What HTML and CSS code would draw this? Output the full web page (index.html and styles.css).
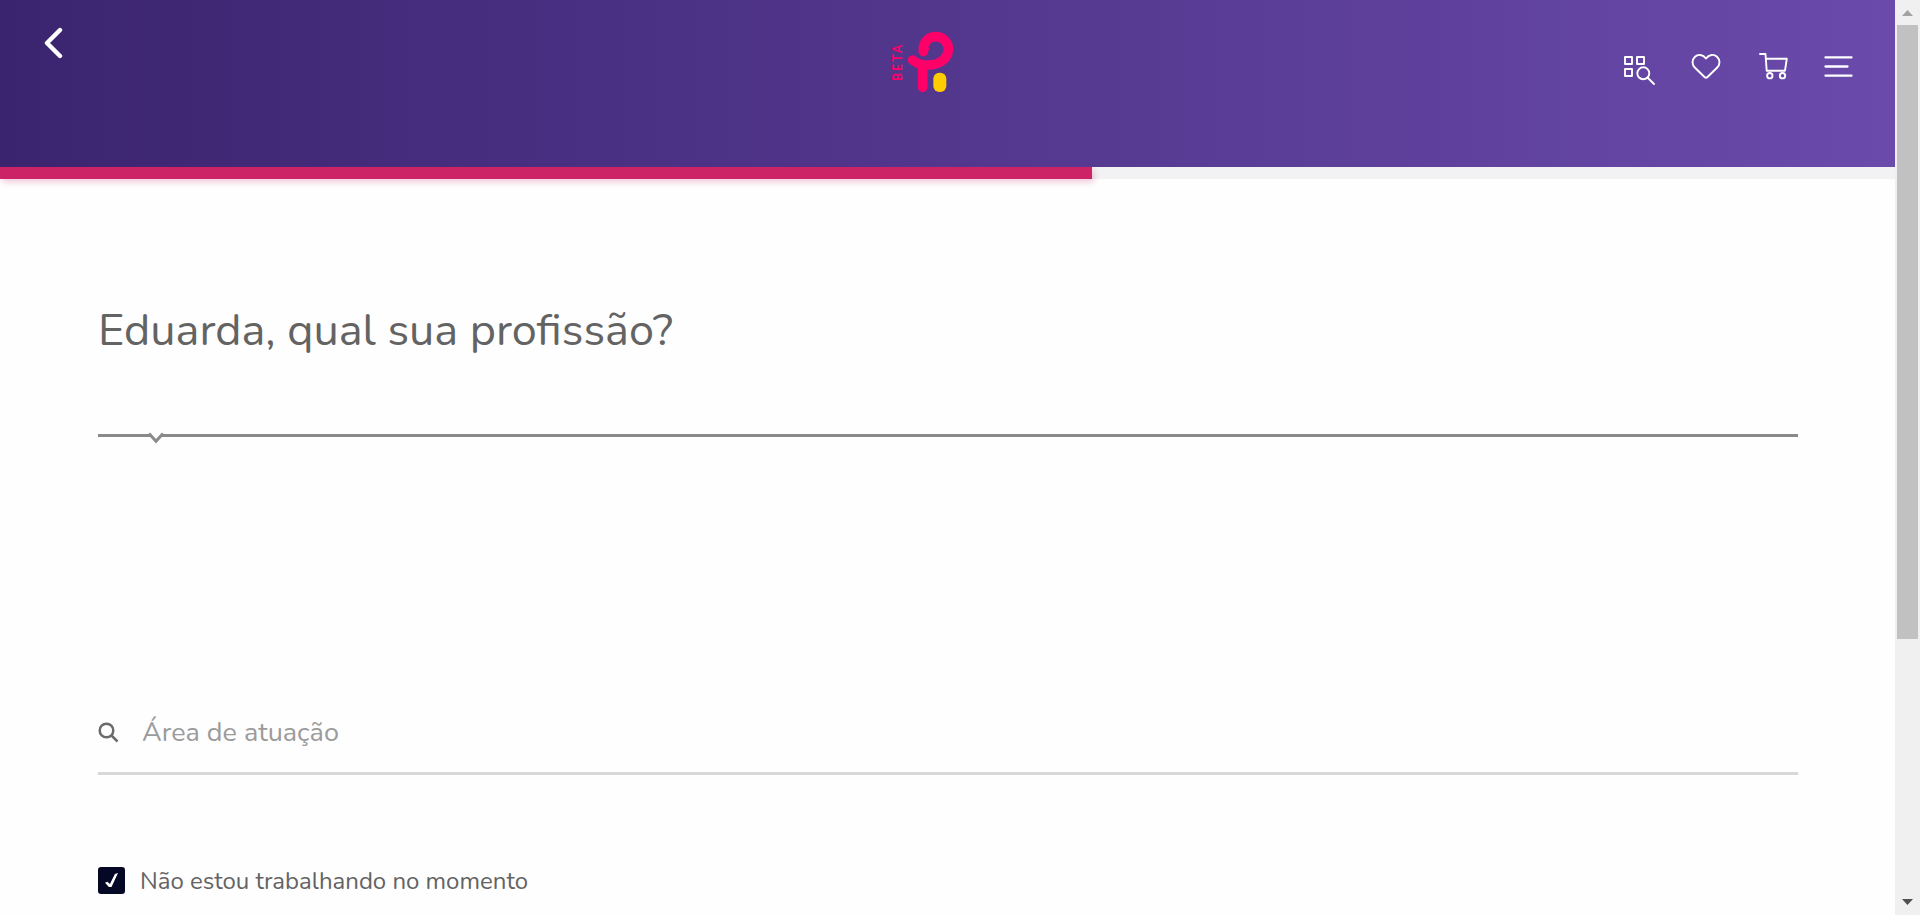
FILE: index.html
```html
<!DOCTYPE html>
<html lang="pt-BR">
<head>
<meta charset="utf-8">
<meta name="viewport" content="width=device-width, initial-scale=1">
<title>Qual sua profissão?</title>
<link rel="stylesheet" href="styles.css">
</head>
<body>
<div class="page">
  <header class="header">
    <button class="icon-button back" type="button" aria-label="Voltar">
      <svg width="20" height="32" viewBox="0 0 20 32"><path d="M16 3 3 16l13 13"/></svg>
    </button>
    <a class="logo" href="#" aria-label="Início">
      <svg width="120" height="90" viewBox="57 0 360 270">
        <path class="logo-stroke" d="M160 95V88C160 66 177 50 197 50C219 50 235 67 235 87C235 118 205 135 173 135C154 135 139 130 128 120M158 134V202"/>
        <path class="logo-stroke logo-hook" d="M161 97C169 97 173 94 175 86"/>
        <rect class="logo-dot" x="190" y="158" width="39" height="58" rx="18"/>
        <text class="logo-beta" transform="translate(96 183) rotate(-90)">BETA</text>
      </svg>
    </a>
    <nav class="actions" aria-label="Menu principal">
      <button class="icon-button" type="button" aria-label="Explorar">
        <svg width="32" height="40" viewBox="0 0 32 40"><path d="M1 7h7v7H1zM13 7h7v7h-7zM1 19h7v7H1zM23.500 27.500l6.500 6.500"/><circle cx="19.300" cy="23.300" r="6"/></svg>
      </button>
      <button class="icon-button" type="button" aria-label="Favoritos">
        <svg width="32" height="40" viewBox="0 0 32 40"><path d="M16 8.500C13 4.200 8 4 5 6.700C1.600 9.900 1.800 14.700 5 17.700L14.500 27Q16 28.500 17.500 27L27 17.700C30.200 14.700 30.400 9.900 27 6.700C24 4 19 4.200 16 8.500z"/></svg>
      </button>
      <button class="icon-button" type="button" aria-label="Carrinho">
        <svg width="32" height="40" viewBox="0 0 32 40"><path d="M4 4H9.500L10.700 20.700H29L30.800 8.700H9.900"/><circle cx="13.800" cy="25.700" r="2.700"/><circle cx="26.500" cy="25.700" r="2.700"/></svg>
      </button>
      <button class="icon-button" type="button" aria-label="Abrir menu">
        <svg class="menu-lines" width="32" height="40" viewBox="0 0 32 40"><path d="M3.500 7.400h26M3.500 16.500h22M3.500 25.700h26"/></svg>
      </button>
    </nav>
  </header>
  <div class="progress" role="progressbar" aria-label="Progresso" aria-valuemin="0" aria-valuemax="100" aria-valuenow="58">
    <div class="progress-fill" style="width: 57.6%"></div>
  </div>
  <main class="content">
    <h1 class="question">Eduarda, qual sua profissão?</h1>
    <div class="divider">
      <svg class="divider-notch" width="18" height="14" viewBox="0 0 18 14"><path class="notch-fill" d="M2 0H16L9 9z"/><path class="notch-line" d="M2 1.500 9 9.200l7-7.700"/></svg>
    </div>
    <form class="form">
      <div class="search">
        <svg class="search-icon" width="22" height="22" viewBox="0 0 22 22"><circle cx="8.500" cy="8.500" r="6.800"/><path d="M13.500 13.500 19.500 19.500"/></svg>
        <input class="search-input" type="text" aria-label="Área de atuação" placeholder="Área de atuação">
      </div>
      <label class="option">
        <input class="option-box" type="checkbox" checked>
        <span class="option-text">Não estou trabalhando no momento</span>
      </label>
    </form>
  </main>
</div>
<div class="scrollbar" aria-hidden="true">
  <svg class="scroll-up" width="25" height="25" viewBox="0 0 25 25"><path d="M7 16h11L12.500 10z"/></svg>
  <div class="scroll-track"><div class="scroll-thumb" style="height: 71%"></div></div>
  <svg class="scroll-down" width="25" height="25" viewBox="0 0 25 25"><path d="M7 9h11L12.500 15z"/></svg>
</div>
</body>
</html>
```
FILE: styles.css
```css
* {
  box-sizing: border-box;
}

body {
  display: grid;
  grid-template-columns: minmax(0, 1fr) 25px;
  min-height: 100vh;
  margin: 0;
  background: #fefefe;
  color: #636363;
  font-family: Nunito, Lato, sans-serif;
}

.header {
  display: grid;
  grid-template-columns: 1fr auto 1fr;
  align-items: start;
  height: 167px;
  padding: 0 41px 0 44px;
  background: linear-gradient(90deg, #3b246f, #6a4aab);
}

.icon-button {
  display: block;
  padding: 0;
  border: 0;
  background: none;
  cursor: pointer;
}

.icon-button svg {
  display: block;
  fill: none;
  stroke: #fff;
  stroke-width: 1.9;
  stroke-linecap: round;
  stroke-linejoin: round;
}

.icon-button .menu-lines {
  stroke-width: 2.3;
}

.back {
  justify-self: start;
  margin-top: 27px;
}

.icon-button.back svg {
  stroke-width: 4.4;
}

.logo {
  margin-top: 20px;
}

.logo svg {
  display: block;
}

.logo-stroke {
  fill: none;
  stroke: #ff0068;
  stroke-width: 29;
  stroke-linecap: round;
  stroke-linejoin: round;
}

.logo-hook {
  stroke-width: 5;
}

.logo-dot {
  fill: #fc0;
}

.logo-beta {
  fill: #ff0068;
  font: 700 37px Lato, sans-serif;
  letter-spacing: 6px;
}

.actions {
  display: flex;
  justify-content: flex-end;
  gap: 34px;
  margin-top: 50px;
}

.progress {
  height: 12px;
  background: #f2f2f4;
}

.progress-fill {
  height: 100%;
  background: #cc2366;
  box-shadow: 2px 3px 6px rgba(204, 35, 102, 0.25);
}

.content {
  padding: 122px 97px 20px 98px;
}

.question {
  margin: 0;
  font-size: 45px;
  font-weight: 400;
  line-height: 60px;
}

.divider {
  position: relative;
  height: 3px;
  margin-top: 73px;
  background: #8a8a8a;
}

.divider-notch {
  position: absolute;
  top: -2px;
  left: 49px;
  fill: none;
}

.notch-fill {
  fill: #fefefe;
}

.notch-line {
  stroke: #8a8a8a;
  stroke-width: 3;
}

.form {
  padding-top: 257px;
}

.search {
  display: flex;
  align-items: center;
  gap: 22px;
  height: 81px;
  border-bottom: 3px solid #d8d8d8;
}

.search-icon {
  fill: none;
  stroke: #6b6b6b;
  stroke-width: 2.5;
}

.search-input {
  flex: 1;
  min-width: 0;
  padding: 0;
  border: 0;
  outline: 0;
  background: none;
  color: #636363;
  font: inherit;
  font-size: 27px;
  line-height: 40px;
}

.search-input::placeholder {
  color: #9b9b9b;
  opacity: 1;
}

.option {
  display: flex;
  align-items: center;
  gap: 15px;
  width: fit-content;
  margin-top: 86px;
  font-size: 24px;
  line-height: 36px;
  cursor: pointer;
}

.option-text {
  padding-top: 2px;
}

.option-box {
  display: grid;
  place-items: center;
  width: 27px;
  height: 27px;
  margin: 0;
  border: 2px solid #040825;
  border-radius: 3px;
  appearance: none;
  background: #fff;
}

.option-box:checked {
  background: #040825;
}

.option-box:checked::before {
  content: "";
  width: 13px;
  height: 14px;
  background: #fff;
  clip-path: polygon(0 70%, 18% 62%, 38% 78%, 76% 8%, 100% 0, 50% 100%, 30% 100%);
}

.scrollbar {
  position: sticky;
  top: 0;
  display: flex;
  flex-direction: column;
  height: 100vh;
  background: #f0f0f0;
}

.scroll-track {
  flex: 1;
  padding: 0 2px;
}

.scroll-thumb {
  background: #c1c1c1;
}

.scroll-up {
  fill: #a3a3a3;
}

.scroll-down {
  fill: #505050;
}
```
